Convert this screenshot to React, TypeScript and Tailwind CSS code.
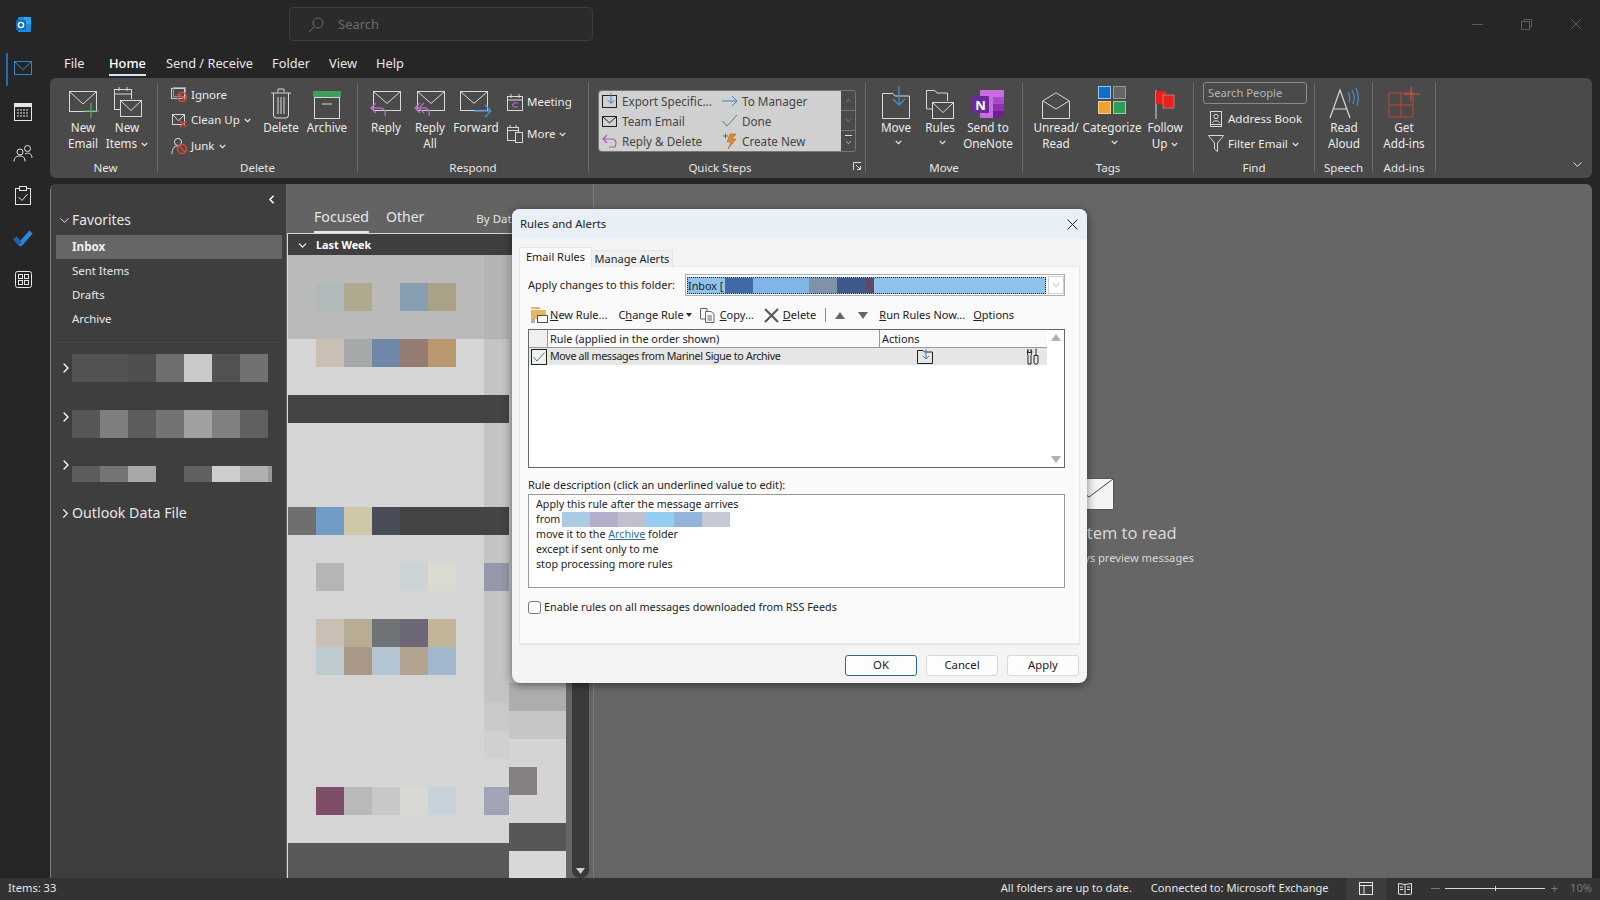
import type { ReactNode } from 'react';
import { ChevronDown, ChevronLeft, ChevronRight, ChevronUp } from 'lucide-react';

const Ico = ({ w, h, children, className }: { w: number; h: number; children: ReactNode; className?: string }) => (
  <svg width={w} height={h} viewBox={`0 0 ${w} ${h}`} className={`block shrink-0 ${className || ''}`}>
    {children}
  </svg>
);

const Envelope = ({ x = 0, y = 0, w = 28, h = 19, c = '#d9d9d9' }: { x?: number; y?: number; w?: number; h?: number; c?: string }) => (
  <g>
    <rect x={x + 0.5} y={y + 0.5} width={w - 1} height={h - 1} fill="none" stroke={c} />
    <path d={`M${x + 1} ${y + 1}L${x + w / 2} ${y + h * 0.62}L${x + w - 1} ${y + 1}`} fill="none" stroke={c} />
  </g>
);

const Caret = () => (
  <svg width="7" height="5" viewBox="0 0 7 5" className="inline-block ml-1 mb-[1px]">
    <path d="M0.8 1L3.5 3.6L6.2 1" fill="none" stroke="#e6e6e6" strokeWidth="1.2" />
  </svg>
);

function Big({ w, icon, lines, caret, caretOnly }: { w: string; icon: ReactNode; lines: string[]; caret?: boolean; caretOnly?: boolean }) {
  return (
    <div className={`flex flex-col items-center shrink-0 ${w}`}>
      <div className="h-[36px] flex items-end justify-center">{icon}</div>
      {lines.map((l, i) => (
        <div key={l} className="h-4 leading-4 text-[11.7px] whitespace-nowrap text-[#ececec]">
          {l}
          {caret && i === lines.length - 1 ? <Caret /> : null}
        </div>
      ))}
      {caretOnly ? <div className="h-4 leading-3"><Caret /></div> : null}
    </div>
  );
}

function Small({ icon, text, caret, h = 'h-[25px]' }: { icon: ReactNode; text: string; caret?: boolean; h?: string }) {
  return (
    <div className={`flex items-center gap-1 whitespace-nowrap text-[11.5px] text-[#ececec] ${h}`}>
      <span className="w-4 flex justify-center shrink-0">{icon}</span>
      <span>
        {text}
        {caret ? <Caret /> : null}
      </span>
    </div>
  );
}

function Group({ w, label, pl, last, children, extra, labelClass }: { w: string; label: string; pl: string; last?: boolean; children: ReactNode; extra?: ReactNode; labelClass?: string }) {
  return (
    <div className={`relative flex flex-col shrink-0 h-[89px] mt-[5px] ${w} ${last ? '' : 'border-r border-[#6b6b6b]'}`}>
      <div className={`flex h-[78px] ${pl}`}>{children}</div>
      <div className={`h-[11px] leading-[14px] text-center text-[11.5px] text-[#e6e6e6] ${labelClass || ''}`}>{label}</div>
      {extra}
    </div>
  );
}

const NoSign = ({ x, y }: { x: number; y: number }) => (
  <g>
    <circle cx={x} cy={y} r="4.5" fill="none" stroke="#d8473d" strokeWidth="1.6" />
    <path d={`M${x - 3} ${y - 3}L${x + 3} ${y + 3}`} stroke="#d8473d" strokeWidth="1.6" />
  </g>
);

const ReplyArrow = ({ double }: { double?: boolean }) => (
  <g fill="none" stroke="#b46bc0" strokeWidth="1.3">
    <path d="M6 13L1 18L6 23M1 18H10C14 18 16 21 15 26" />
    {double ? <path d="M10 13L5 18L10 23" /> : null}
  </g>
);

const QS = ({ icon, text }: { icon: ReactNode; text: string }) => (
  <div className="flex items-center gap-1 h-5 whitespace-nowrap">
    <span className="w-4 shrink-0 flex justify-center">{icon}</span>
    {text}
  </div>
);

function Ribbon() {
  return (
    <div className="flex h-[100px] rounded-md bg-[#4a4a4a] relative">
      <Group w="w-[108px]" label="New" pl="pl-[11px]" labelClass="pl-1">
        <Big w="w-11" lines={['New', 'Email']} icon={
          <Ico w={34} h={32}>
            <Envelope x={3} y={4} w={28} h={21} />
            <path d="M25 16V31M18 24H33" stroke="#4fae68" strokeWidth="1.2" />
          </Ico>
        } />
        <Big w="w-11" lines={['New', 'Items']} caret icon={
          <Ico w={30} h={33}>
            <rect x="2.5" y="3.5" width="17" height="20" fill="none" stroke="#d9d9d9" />
            <path d="M3 8H19M7 1V5M15 1V5" stroke="#d9d9d9" />
            <rect x="8" y="13" width="22" height="18" fill="#4a4a4a" />
            <Envelope x={8} y={14} w={22} h={17} />
          </Ico>
        } />
      </Group>

      <Group w="w-[200px]" label="Delete" pl="pl-[13px]">
        <div className="w-[88px] shrink-0 -mt-[1px]">
          <Small text="Ignore" icon={
            <Ico w={17} h={15}>
              <rect x="0.5" y="1.5" width="13" height="10" fill="none" stroke="#cfcfcf" />
              <rect x="2.5" y="0.5" width="12" height="9" fill="none" stroke="#9a9a9a" />
              <NoSign x={11} y={10} />
            </Ico>
          } />
          <Small h="h-[26px]" text="Clean Up" caret icon={
            <Ico w={17} h={15}>
              <Envelope x={1} y={1} w={13} h={11} />
              <path d="M9 8L15 14M15 8L9 14" stroke="#d8473d" strokeWidth="1.5" />
            </Ico>
          } />
          <Small text="Junk" caret icon={
            <Ico w={17} h={18}>
              <circle cx="7" cy="5" r="3.6" fill="none" stroke="#d9d9d9" />
              <path d="M1 17C1 12 3 9 6 9" fill="none" stroke="#d9d9d9" />
              <NoSign x={11} y={12} />
            </Ico>
          } />
        </div>
        <Big w="w-11" lines={['Delete']} icon={
          <Ico w={22} h={31}>
            <path d="M1 5H21M8 4V1H14V4" fill="none" stroke="#d9d9d9" />
            <path d="M3.5 5V27Q3.5 30 6 30H16Q18.5 30 18.5 27V5M8 9V26M11 9V26M14 9V26" fill="none" stroke="#d9d9d9" />
          </Ico>
        } />
        <div className="w-[2px] shrink-0" />
        <Big w="w-11" lines={['Archive']} icon={
          <Ico w={28} h={28}>
            <rect x="0" y="0" width="28" height="6" fill="#3f9e5a" />
            <rect x="1.5" y="6.5" width="25" height="21" fill="none" stroke="#d9d9d9" />
            <path d="M9 13H19" stroke="#d9d9d9" />
          </Ico>
        } />
      </Group>

      <Group w="w-[231px]" label="Respond" pl="pl-[6px]">
        <Big w="w-11" lines={['Reply']} icon={
          <Ico w={32} h={29}>
            <Envelope x={3} y={1} w={28} h={20} />
            <ReplyArrow />
          </Ico>
        } />
        <Big w="w-11" lines={['Reply', 'All']} icon={
          <Ico w={32} h={29}>
            <Envelope x={3} y={1} w={28} h={20} />
            <ReplyArrow double />
          </Ico>
        } />
        <Big w="w-12" lines={['Forward']} icon={
          <Ico w={32} h={29}>
            <Envelope x={0} y={1} w={28} h={20} />
            <path d="M14 21H30M25 15L31 21L25 27" fill="none" stroke="#4b8fd0" strokeWidth="1.3" />
          </Ico>
        } />
        <div className="ml-[7px] pt-[7px] flex flex-col gap-2">
          <Small h="h-6" text="Meeting" icon={
            <Ico w={16} h={17}>
              <rect x="0.5" y="2.5" width="15" height="14" fill="none" stroke="#d9d9d9" />
              <path d="M1 6H15M4 0V4M12 0V4" stroke="#d9d9d9" />
              <path d="M11 9H7L5.5 11L7 13H11" fill="none" stroke="#b46bc0" strokeWidth="1.2" />
            </Ico>
          } />
          <Small h="h-6" text="More" caret icon={
            <Ico w={16} h={18}>
              <rect x="0.5" y="2.5" width="11" height="13" fill="none" stroke="#d9d9d9" />
              <path d="M1 5.5H11M3 0V3M9 0V3" stroke="#d9d9d9" />
              <rect x="8.5" y="7.5" width="7" height="10" fill="#4a4a4a" stroke="#d9d9d9" />
            </Ico>
          } />
        </div>
      </Group>

      <Group w="w-[277px]" label="Quick Steps" pl="pl-[9px]" labelClass="pr-[14px]" extra={
        <svg width="9" height="9" viewBox="0 0 9 9" className="absolute right-[3px] bottom-[1px]">
          <path d="M0.5 8V0.5H8M3 3L7.5 7.5M7.5 4V7.5H4" fill="none" stroke="#dcdcdc" />
        </svg>
      }>
        <div className="flex h-[62px] w-[258px] mt-[7px] rounded-[3px] border border-[#777]">
          <div className="w-[243px] bg-[#d0d0d0] rounded-l-[3px] pl-[3px] grid grid-cols-[120px_1fr] content-start text-[11.7px] text-[#444] leading-5">
            <QS icon={<Ico w={16} h={16}><rect x="0.5" y="2.5" width="14" height="12" fill="none" stroke="#222" /><path d="M9 0V10M5.5 7L9 10.5L12.5 7" fill="none" stroke="#3d7fbf" /></Ico>} text="Export Specific..." />
            <QS icon={<Ico w={16} h={14}><path d="M0 7H15M10 2L15 7L10 12" fill="none" stroke="#3d7fbf" /></Ico>} text="To Manager" />
            <QS icon={<Ico w={16} h={13}><Envelope x={0} y={1} w={15} h={11} c="#222" /></Ico>} text="Team Email" />
            <QS icon={<Ico w={16} h={14}><path d="M0.5 7L5 12L15 1" fill="none" stroke="#4c8a5c" /></Ico>} text="Done" />
            <QS icon={<Ico w={16} h={14}><path d="M5 1L1 5L5 9M1 5H10C14 5 15 9 13 13H7" fill="none" stroke="#a45cb0" strokeWidth="1.1" /></Ico>} text="Reply & Delete" />
            <QS icon={<Ico w={16} h={17}><path d="M1 3H6M3.5 0.5V5.5" stroke="#1f8a4c" /><path d="M14 1H8L5 9H9L6 16L14 6H10Z" fill="#e28a2b" stroke="#a8561a" strokeWidth="0.5" /></Ico>} text="Create New" />
          </div>
          <div className="w-[14px] flex flex-col text-[#8c8c8c]">
            <div className="h-5 flex items-center justify-center border-b border-[#777]"><ChevronUp size={9} strokeWidth={2} /></div>
            <div className="h-5 flex items-center justify-center border-b border-[#777]"><ChevronDown size={9} strokeWidth={2} /></div>
            <div className="flex-1 flex flex-col items-center justify-center gap-[2px] text-[#e0e0e0]">
              <div className="w-[7px] border-t border-[#e0e0e0]" />
              <ChevronDown size={9} strokeWidth={2} />
            </div>
          </div>
        </div>
      </Group>

      <Group w="w-[157px]" label="Move" pl="pl-[8px]">
        <Big w="w-11" lines={['Move']} caretOnly icon={
          <Ico w={28} h={33}>
            <path d="M0.5 7.5H11L13 10H27.5V32.5H0.5Z" fill="none" stroke="#d9d9d9" />
            <path d="M17 0V19M11 13L17 19L23 13" fill="none" stroke="#4b8fd0" strokeWidth="1.2" />
          </Ico>
        } />
        <Big w="w-11" lines={['Rules']} caretOnly icon={
          <Ico w={28} h={30}>
            <path d="M0.5 1.5H9L11 4H21.5V20H0.5Z" fill="none" stroke="#d9d9d9" />
            <rect x="6" y="12" width="22" height="18" fill="#4a4a4a" />
            <Envelope x={6} y={13} w={22} h={17} />
          </Ico>
        } />
        <Big w="w-[52px]" lines={['Send to', 'OneNote']} icon={
          <Ico w={34} h={30}>
            <rect x="9" y="1" width="24" height="28" rx="1" fill="#c66de0" />
            <rect x="22" y="8" width="11" height="7" fill="#a94ac7" />
            <rect x="22" y="15" width="11" height="7" fill="#8d33ad" />
            <rect x="22" y="22" width="11" height="7" fill="#6d2290" />
            <rect x="1" y="7" width="17" height="17" rx="1" fill="#6a2a9c" />
            <text x="9.5" y="20.5" textAnchor="middle" fontSize="13" fontWeight="700" fill="#fff">N</text>
          </Ico>
        } />
      </Group>

      <Group w="w-[171px]" label="Tags" pl="pl-[5px]">
        <Big w="w-14" lines={['Unread/', 'Read']} icon={
          <Ico w={28} h={27}>
            <path d="M0.5 9L14 0.8L27.5 9V26.5H0.5Z" fill="none" stroke="#d9d9d9" />
            <path d="M1 9L14 17L27 9" fill="none" stroke="#d9d9d9" />
          </Ico>
        } />
        <Big w="w-14" lines={['Categorize']} caretOnly icon={
          <div className="grid grid-cols-[13px_13px] grid-rows-[13px_13px] gap-[2px] mb-[5px]">
            <div className="bg-[#0f6fc6] border border-[#9cc4e8]" />
            <div className="bg-[#666] border border-[#999]" />
            <div className="bg-[#f0a22e] border border-[#f4cf96]" />
            <div className="bg-[#2f9e55] border border-[#9ed0ae]" />
          </div>
        } />
        <Big w="w-[50px]" lines={['Follow', 'Up']} caret icon={
          <Ico w={20} h={29}>
            <path d="M1 0V29" stroke="#d9d9d9" />
            <rect x="1" y="1" width="10" height="13" fill="#e8201c" />
            <rect x="8" y="5" width="11" height="13" fill="#e8201c" stroke="#f29a96" strokeWidth="0.6" />
          </Ico>
        } />
      </Group>

      <Group w="w-[121px]" label="Find" pl="pl-[9px]">
        <div className="flex flex-col w-[104px]">
          <div className="h-[22px] -mt-[1px] rounded-[3px] border border-[#8a8a8a] px-1 text-[11.2px] leading-[19px] text-[#b5b5b5]">Search People</div>
          <div className="mt-[2px] pl-[5px]">
            <Small text="Address Book" icon={
              <Ico w={13} h={16}>
                <rect x="0.5" y="0.5" width="11" height="15" fill="none" stroke="#d9d9d9" />
                <circle cx="6" cy="5.5" r="2.2" fill="none" stroke="#d9d9d9" />
                <path d="M2.5 12C3 9 9 9 9.5 12M0 13.5H12" fill="none" stroke="#d9d9d9" />
              </Ico>
            } />
            <Small text="Filter Email" caret icon={
              <Ico w={16} h={17}>
                <path d="M0.5 0.5H15.5L9.5 8V16.5L6.5 14V8Z" fill="none" stroke="#d9d9d9" />
              </Ico>
            } />
          </div>
        </div>
      </Group>

      <Group w="w-[58px]" label="Speech" pl="pl-[1px]">
        <Big w="w-14" lines={['Read', 'Aloud']} icon={
          <Ico w={30} h={31}>
            <path d="M1 30L11 2L21 30M5 21H18" fill="none" stroke="#d9d9d9" strokeWidth="1.2" />
            <path d="M19 4Q22 9 20 14M23 2Q27 9 24 16M27 0Q31 9 28 18" fill="none" stroke="#4b8fd0" strokeWidth="1.2" />
          </Ico>
        } />
      </Group>

      <Group w="w-[63px]" label="Add-ins" pl="pl-[3px]">
        <Big w="w-14" lines={['Get', 'Add-ins']} icon={
          <Ico w={33} h={32}>
            <path d="M1 6H25V30H1ZM13 6V30M1 18H25" fill="none" stroke="#c8452e" />
            <path d="M23 0V14M16 7H32" stroke="#d8573f" />
          </Ico>
        } />
      </Group>

      <ChevronDown size={15} strokeWidth={1.5} className="absolute right-[7px] bottom-[6px] text-[#e6e6e6]" />
    </div>
  );
}

function Rail() {
  return (
    <div className="w-[50px] shrink-0 flex flex-col items-center pr-[4px] relative">
      <div className="h-[48px] flex items-center pt-[1px]">
        <Ico w={17} h={17}>
          <rect x="3" y="1" width="13" height="15" rx="1" fill="#1490df" />
          <rect x="9" y="1" width="7" height="7" fill="#28a8ea" />
          <rect x="1" y="4" width="10" height="10" rx="1" fill="#0f6cbd" />
          <circle cx="6" cy="9" r="2.6" fill="none" stroke="#fff" strokeWidth="1.4" />
        </Ico>
      </div>
      <div className="h-[40px] w-full flex items-center justify-center">
        <div className="absolute left-[6px] top-[53px] w-[2px] h-[33px] bg-[#1d6fb8] rounded-full" />
        <Ico w={18} h={14}><Envelope x={0} y={0} w={18} h={14} c="#2f86c9" /></Ico>
      </div>
      <div className="h-[46px] flex items-center justify-center">
        <Ico w={18} h={19}>
          <rect x="0.5" y="1.5" width="17" height="17" fill="none" stroke="#e6e6e6" />
          <rect x="1" y="1" width="16" height="4" fill="#e6e6e6" />
          <path d="M3 8H15M3 11H15M3 14H15" stroke="#e6e6e6" strokeDasharray="2 1" />
        </Ico>
      </div>
      <div className="h-[38px] flex items-center justify-center">
        <Ico w={20} h={18}>
          <circle cx="7" cy="8" r="3" fill="none" stroke="#e6e6e6" />
          <path d="M1 17.5C1 13 4 12 7 12C10 12 12 13.5 12 17.5" fill="none" stroke="#e6e6e6" />
          <circle cx="14.5" cy="4.5" r="3" fill="none" stroke="#e6e6e6" />
          <path d="M12 10C15 8 19 9.5 19 14" fill="none" stroke="#e6e6e6" />
        </Ico>
      </div>
      <div className="h-[46px] flex items-center justify-center">
        <Ico w={16} h={19}>
          <rect x="0.5" y="2.5" width="15" height="16" fill="none" stroke="#e6e6e6" />
          <rect x="4.5" y="0.5" width="7" height="4" fill="#262626" stroke="#e6e6e6" />
          <path d="M3.5 11L7 14.5L12.5 8" fill="none" stroke="#e6e6e6" />
        </Ico>
      </div>
      <div className="h-[38px] flex items-center justify-center">
        <Ico w={20} h={17}>
          <path d="M2 9L7.5 15L18 3" fill="none" stroke="#2f86e0" strokeWidth="4.5" />
          <path d="M2 9L7.5 15" fill="none" stroke="#1b5fa8" strokeWidth="4.5" />
        </Ico>
      </div>
      <div className="h-[46px] flex items-center justify-center">
        <Ico w={17} h={17}>
          <rect x="0.5" y="0.5" width="16" height="16" rx="2" fill="none" stroke="#e6e6e6" />
          <rect x="3.5" y="3.5" width="4" height="4" fill="none" stroke="#e6e6e6" />
          <rect x="9.5" y="3.5" width="4" height="4" fill="none" stroke="#e6e6e6" />
          <rect x="3.5" y="9.5" width="4" height="4" fill="none" stroke="#e6e6e6" />
          <rect x="9.5" y="9.5" width="4" height="4" fill="none" stroke="#e6e6e6" />
        </Ico>
      </div>
    </div>
  );
}

function Blocks({ cells, h = 'h-7' }: { cells: string[]; h?: string }) {
  return (
    <div className="flex">
      {cells.map((c, i) => (
        <div key={i} className={`${h} ${c === 'bg-[#999999]' ? 'w-1' : 'w-7'} ${c}`} />
      ))}
    </div>
  );
}

function FolderPane() {
  return (
    <div className="w-[236px] shrink-0 bg-[#3e3e3e] border-l border-[#7a7a7a] rounded-tl-md text-white relative">
      <ChevronLeft size={13} strokeWidth={3} className="absolute right-[8px] top-[9px]" />
      <div className="h-[26px] mt-[23px] pl-[6px] flex items-center text-[13.8px] text-[#e8e8e8]">
        <ChevronDown size={15} strokeWidth={1.5} />
        Favorites
      </div>
      <div className="ml-[5px] mr-[4px] mt-[2px] h-6 bg-[#666] pl-4 flex items-center font-bold text-[11.7px] text-[#f0f0f0]">Inbox</div>
      <div className="pl-[21px] text-[11.4px] text-[#eaeaea]">
        <div className="h-6 leading-6">Sent Items</div>
        <div className="h-6 leading-6">Drafts</div>
        <div className="h-6 leading-6">Archive</div>
      </div>
      <div className="ml-[5px] mr-[6px] mt-[11px] border-t border-[#484848]" />
      <div className="mt-[11px] pl-[21px] relative">
        <ChevronRight size={16} strokeWidth={2} className="absolute left-[7px] top-[6px]" />
        <Blocks cells={['bg-[#535353]', 'bg-[#535353]', 'bg-[#4e4e4e]', 'bg-[#6e6e6e]', 'bg-[#c9c9c9]', 'bg-[#525252]', 'bg-[#717171]']} />
      </div>
      <div className="mt-7 pl-[21px] relative">
        <ChevronRight size={16} strokeWidth={2} className="absolute left-[7px] top-[-1px]" />
        <Blocks cells={['bg-[#565656]', 'bg-[#7e7e7e]', 'bg-[#5c5c5c]', 'bg-[#737373]', 'bg-[#a0a0a0]', 'bg-[#808080]', 'bg-[#606060]']} />
      </div>
      <div className="mt-7 pl-[21px] relative">
        <ChevronRight size={16} strokeWidth={2} className="absolute left-[7px] top-[-9px]" />
        <Blocks h="h-4" cells={['bg-[#5d5d5d]', 'bg-[#747474]', 'bg-[#a8a8a8]', '', 'bg-[#616161]', 'bg-[#cdcdcd]', 'bg-[#b0b0b0]', 'bg-[#999999]']} />
      </div>
      <div className="mt-[19px] pl-[7px] h-6 flex items-center text-[14.2px] text-[#e8e8e8]">
        <ChevronRight size={15} strokeWidth={2} className="mr-[-1px]" />
        Outlook Data File
      </div>
    </div>
  );
}

const SEL = 'bg-[#bababa]';
const PLN = 'bg-[#d5d5d5]';
const DRK = 'bg-[#444444]';
const C7 = 'bg-[#c4c4c4]';

const listRows: [string, string[]][] = [
  [SEL, ['', '', '', '', '', '', '', 'bg-[#b4b4b4]']],
  [SEL, ['', 'bg-[#b2b9bb]', 'bg-[#aeaa8d]', '', 'bg-[#879db0]', 'bg-[#a9a286]', '', 'bg-[#b4b4b4]']],
  [SEL, ['', '', '', '', '', '', '', 'bg-[#b4b4b4]']],
  [PLN, ['', 'bg-[#c9bfb4]', 'bg-[#a5a9aa]', 'bg-[#6f88a8]', 'bg-[#947c72]', 'bg-[#b9976f]', '', C7]],
  [PLN, ['', '', '', '', '', '', '', C7]],
  [DRK, ['', '', '', '', '', '', '', '']],
  [PLN, ['', '', '', '', '', '', '', C7]],
  [PLN, ['', '', '', '', '', '', '', C7]],
  [PLN, ['', '', '', '', '', '', '', C7]],
  [DRK, ['bg-[#6f6f6f]', 'bg-[#6f9bc5]', 'bg-[#d0c7a8]', 'bg-[#484d58]', '', '', '', '']],
  [PLN, ['', '', '', '', '', '', '', C7]],
  [PLN, ['', 'bg-[#b5b5b5]', '', '', 'bg-[#ccd3d6]', 'bg-[#dbdad0]', '', 'bg-[#9498a8]']],
  [PLN, ['', '', '', '', '', '', '', C7]],
  [PLN, ['', 'bg-[#c9bfb4]', 'bg-[#b8ac94]', 'bg-[#6f7375]', 'bg-[#6c6878]', 'bg-[#c3b597]', '', C7]],
  [PLN, ['', 'bg-[#bfcccf]', 'bg-[#a99888]', 'bg-[#b3c4d2]', 'bg-[#b3a491]', 'bg-[#a0b7cc]', '', C7]],
  [PLN, ['', '', '', '', '', '', '', C7]],
  [PLN, ['', '', '', '', '', '', '', 'bg-[#c9c9c9]']],
  [PLN, ['', '', '', '', '', '', '', 'bg-[#d0d0d0]']],
  [PLN, ['', '', '', '', '', '', '', '']],
  [PLN, ['', 'bg-[#7e4d66]', 'bg-[#b9b9b7]', 'bg-[#c6c8ca]', 'bg-[#d8d8d4]', 'bg-[#c8d2da]', '', 'bg-[#a2a3b5]']],
  [PLN, ['', '', '', '', '', '', '', '']],
];

function MessageList() {
  return (
    <div className="w-[307px] shrink-0 bg-[#636363] flex flex-col">
      <div className="h-[49px] flex items-start pl-[28px] text-[#e6e6e6]">
        <div className="h-[49px] pt-[23px] w-[55px] border-b-2 border-[#e8e8e8] text-[14.2px] leading-5 whitespace-nowrap">Focused</div>
        <div className="pt-[23px] ml-[17px] text-[14px] leading-5">Other</div>
        <div className="pt-[25px] ml-[52px] text-[11.5px] leading-5 whitespace-nowrap">By Date</div>
      </div>
      <div className="flex-1 flex">
        <div className="w-[279px] ml-[1px] border-l border-t border-[#d8d8d8] flex flex-col bg-[#d5d5d5]">
          <div className="h-[21px] bg-[#3f3f3f] flex items-center pt-[2px] text-white text-[10.8px] font-bold">
            <ChevronDown size={13} strokeWidth={2} className="ml-[8px] mr-[7px]" />
            Last Week
          </div>
          <div className="flex flex-1">
            <div className="w-[221px] shrink-0 flex flex-col">
              {listRows.map(([bg, cells], i) => (
                <div key={i} className={`flex h-7 ${bg}`}>
                  {cells.map((c, j) => (
                    <div key={j} className={`h-7 shrink-0 ${j === 7 ? 'w-[25px]' : 'w-7'} ${c}`} />
                  ))}
                </div>
              ))}
              <div className="flex-1 bg-[#585858]" />
            </div>
            <div className="flex-1 flex flex-col">
              <div className="h-[428px] bg-[#c4c4c4]" />
              <div className="h-7 bg-[#aeaeae]" />
              <div className="h-7 bg-[#c6c6c6]" />
              <div className="h-7 bg-[#d4d4d4]" />
              <div className="h-7 flex bg-[#d4d4d4]"><div className="w-7 bg-[#857f80]" /></div>
              <div className="h-7 bg-[#d4d4d4]" />
              <div className="h-7 bg-[#575757]" />
              <div className="flex-1 bg-[#d8d8d8]" />
            </div>
          </div>
        </div>
        <div className="w-[6px] bg-[#666]" />
        <div className="w-[17px] bg-[#3a3a3a] rounded-b-lg flex flex-col justify-end items-center pb-[4px]">
          <svg width="9" height="6" viewBox="0 0 9 6"><path d="M0 0H9L4.5 6Z" fill="#d0d0d0" /></svg>
        </div>
      </div>
    </div>
  );
}

function ReadingPane() {
  return (
    <div className="flex-1 bg-[#666] border-l border-[#7a7a7a] flex flex-col items-center pt-[294px] text-[#d8d8d8]">
      <Ico w={50} h={32} className="-ml-[9px]">
        <rect x="0.5" y="0.5" width="49" height="31" fill="#f4f4f4" stroke="#555" />
        <path d="M1 1L25 19L49 1" fill="none" stroke="#444" />
      </Ico>
      <div className="mt-[11px] text-[16.4px] leading-6 whitespace-nowrap">Select an item to read</div>
      <div className="mt-[5px] text-[11.2px] leading-4 whitespace-nowrap">Click here to always preview messages</div>
    </div>
  );
}

function Btn({ children, primary }: { children: ReactNode; primary?: boolean }) {
  return (
    <div className={`w-[72px] h-[21px] bg-[#fdfdfd] rounded-[3px] border flex items-center justify-center text-[11.3px] text-[#222] ${primary ? 'border-[#2b6a8f]' : 'border-[#d8d8d8]'}`}>
      {children}
    </div>
  );
}

function RulesDialog() {
  return (
    <div className="absolute left-[512px] top-[209px] w-[575px] h-[474px] rounded-lg bg-[#f4f4f4] shadow-[0_2px_10px_rgba(0,0,0,0.5)] overflow-hidden text-[11px] text-[#222] flex flex-col">
      <div className="h-[30px] bg-[#e9eff6] flex items-center pl-[8px] pr-[9px] justify-between text-[11.4px]">
        <span>Rules and Alerts</span>
        <svg width="11" height="11" viewBox="0 0 11 11"><path d="M0.5 0.5L10.5 10.5M10.5 0.5L0.5 10.5" stroke="#222" strokeWidth="1" /></svg>
      </div>
      <div className="h-[406px] mx-[7px] flex flex-col border-b border-[#e2e2e2]">
        <div className="flex h-[19px] mt-[9px] items-end whitespace-nowrap">
          <div className="w-[73px] h-[20px] bg-[#fafafa] border border-b-0 border-[#e4e4e4] text-center leading-[17px] relative">Email Rules</div>
          <div className="w-[81px] h-[17px] bg-[#f0f0f0] border-t border-r border-[#e4e4e4] text-center leading-[15px]">Manage Alerts</div>
        </div>
        <div className="flex-1 bg-[#fafafa] border border-[#e8e8e8] -mt-px pl-[8px] pr-[14px]">
          <div className="flex items-center h-[24px] mt-[6px]">
            <span className="w-[157px] shrink-0 whitespace-nowrap">Apply changes to this folder:</span>
            <div className="flex-1 h-[22px] border border-[#adadad] bg-white flex items-center p-[1px] pr-0">
              <div className="flex-1 h-[17px] bg-[#90c3ec] border border-dotted border-[#222] flex leading-[15px] overflow-hidden text-[10.8px]">
                <span className="w-[37px] shrink-0 whitespace-nowrap text-[#222]">Inbox [</span>
                <div className="w-7 bg-[#3f6aa5]" />
                <div className="w-14 bg-[#80b5e5]" />
                <div className="w-7 bg-[#7f92a8]" />
                <div className="w-7 bg-[#3f5a8a]" />
                <div className="w-[9px] bg-[#5f4868]" />
              </div>
              <div className="w-[16px] ml-[2px] h-[18px] border border-[#d0d0d0] flex items-center justify-center text-[#555]"><ChevronDown size={12} strokeWidth={1} /></div>
            </div>
          </div>

          <div className="flex items-center h-[20px] mt-[8px] whitespace-nowrap">
            <Ico w={17} h={16} className="ml-[3px]">
              <rect x="0" y="3" width="15" height="9" fill="#e8b565" />
              <path d="M0 1H9" stroke="#e8b565" strokeWidth="2" />
              <rect x="6.5" y="8.5" width="10" height="7" fill="#fff" stroke="#555" />
              <path d="M0 13H4M0 15H4" stroke="#666" />
            </Ico>
            <span className="ml-[2px]"><u>N</u>ew Rule...</span>
            <span className="ml-[11px]">C<u>h</u>ange Rule</span>
            <svg width="6" height="4" viewBox="0 0 6 4" className="ml-[2px]"><path d="M0 0H6L3 4Z" fill="#333" /></svg>
            <Ico w={15} h={15} className="ml-[8px]">
              <path d="M0.5 0.5H7V11H0.5Z" fill="none" stroke="#666" />
              <path d="M5.5 3.5H11L14 6V14.5H5.5Z" fill="#fafafa" stroke="#666" />
              <path d="M7.5 8H12M7.5 10H12M7.5 12H12" stroke="#666" />
            </Ico>
            <span className="ml-[5px]"><u>C</u>opy...</span>
            <Ico w={15} h={15} className="ml-[10px]">
              <path d="M1 1L14 14M14 1L1 14" stroke="#555" strokeWidth="2" />
            </Ico>
            <span className="ml-[4px]"><u>D</u>elete</span>
            <div className="w-px h-[14px] bg-[#888] ml-[9px]" />
            <svg width="10" height="7" viewBox="0 0 10 7" className="ml-[9px]"><path d="M5 0L10 7H0Z" fill="#666" /></svg>
            <svg width="10" height="7" viewBox="0 0 10 7" className="ml-[13px]"><path d="M0 0H10L5 7Z" fill="#666" /></svg>
            <span className="ml-[11px]"><u>R</u>un Rules Now...</span>
            <span className="ml-[8px]"><u>O</u>ptions</span>
          </div>

          <div className="h-[139px] mt-[4px] border border-[#666] bg-white flex">
            <div className="w-[518px] shrink-0">
              <div className="h-[18px] flex border-b border-[#999] bg-[#fafafa] leading-[17px] text-[10.9px]">
                <div className="w-[19px] border-r border-[#999] bg-[#f0f0f0]" />
                <div className="w-[332px] border-r border-[#999] pl-[2px]">Rule (applied in the order shown)</div>
                <div className="pl-[2px]">Actions</div>
              </div>
              <div className="h-[17px] bg-[#e6e6e6] flex items-center">
                <div className="w-[16px] h-[16px] ml-[2px] border border-[#222] bg-[#f0f0f0] flex items-center justify-center">
                  <svg width="12" height="10" viewBox="0 0 12 10"><path d="M0.5 5L4 9L11.5 0.5" fill="none" stroke="#3f8a5c" /></svg>
                </div>
                <span className="ml-[3px] w-[368px] whitespace-nowrap text-[10.7px] tracking-[-0.33px]">Move all messages from Marinel Sigue to Archive</span>
                <Ico w={17} h={15} className="-ml-[1px]">
                  <path d="M0.5 1.5H6L7.5 3H15.5V14.5H0.5Z" fill="none" stroke="#222" />
                  <path d="M9 0V10M6 7L9 10L12 7" fill="none" stroke="#3d7fbf" />
                </Ico>
                <Ico w={14} h={17} className="ml-[92px]">
                  <path d="M3.5 7V15.5H0.5V7C-0.5 5 0 2 0.5 1V4H3.5V1C4.5 2 4.5 5 3.5 7Z" transform="translate(1.5 0.5)" fill="none" stroke="#222" />
                  <path d="M10 0.5V7M8 7.5H12V15C12 16.5 8 16.5 8 15Z" fill="none" stroke="#222" />
                </Ico>
              </div>
            </div>
            <div className="flex-1 flex flex-col items-center justify-between py-[4px]">
              <svg width="10" height="7" viewBox="0 0 10 7"><path d="M5 0L10 7H0Z" fill="#b0b0b0" /></svg>
              <svg width="10" height="7" viewBox="0 0 10 7"><path d="M0 0H10L5 7Z" fill="#b0b0b0" /></svg>
            </div>
          </div>

          <div className="mt-[9px] h-[17px] leading-4 text-[10.9px]">Rule description (click an underlined value to edit):</div>
          <div className="h-[94px] border border-[#9a9a9a] bg-white pl-[7px] pt-[2px] leading-[15px] text-[10.7px]">
            <div>Apply this rule after the message arrives</div>
            <div className="flex">
              <span className="w-[26px]">from</span>
              <div className="w-7 bg-[#a9cbe3]" />
              <div className="w-7 bg-[#b5aecb]" />
              <div className="w-7 bg-[#c0bfcb]" />
              <div className="w-7 bg-[#94cdf0]" />
              <div className="w-7 bg-[#93b5db]" />
              <div className="w-7 bg-[#c6c8d3]" />
            </div>
            <div>move it to the <u className="text-[#2f6f96]">Archive</u> folder</div>
            <div>except if sent only to me</div>
            <div>stop processing more rules</div>
          </div>

          <div className="flex items-center h-[14px] mt-[12px] text-[10.8px]">
            <div className="w-[13px] h-[13px] rounded-[3px] border border-[#777] bg-white" />
            <span className="ml-[3px]">Enable rules on all messages downloaded from RSS Feeds</span>
          </div>
        </div>
      </div>
      <div className="flex justify-end gap-[9px] pr-[8px] pt-[10px]">
        <Btn primary>OK</Btn>
        <Btn>Cancel</Btn>
        <Btn>Apply</Btn>
      </div>
    </div>
  );
}

function StatusBar() {
  return (
    <div className="h-[22px] bg-[#333] flex items-center pb-[1px] text-[11.1px] text-[#e6e6e6] whitespace-nowrap">
      <span className="ml-2">Items: 33</span>
      <span className="ml-auto">All folders are up to date.</span>
      <span className="ml-[19px]">Connected to: Microsoft Exchange</span>
      <div className="w-[40px] h-[22px] ml-[17px] bg-[#3d3d3d] flex items-center justify-center">
        <Ico w={14} h={13}>
          <rect x="0.5" y="0.5" width="13" height="12" fill="none" stroke="#e6e6e6" />
          <path d="M0 3.5H14M5 3V13" stroke="#e6e6e6" />
        </Ico>
      </div>
      <Ico w={14} h={13} className="ml-[12px]">
        <path d="M0.5 1.5L7 2.5L13.5 1.5V12L7 13L0.5 12ZM7 2.5V13M2 5H5M2 7.5H5M9 5H12M9 7.5H12" fill="none" stroke="#e6e6e6" />
      </Ico>
      <div className="w-[9px] border-t border-[#777] ml-[19px]" />
      <div className="w-[100px] ml-[5px] border-t border-[#d8d8d8] relative">
        <div className="absolute left-1/2 -top-[3px] h-[5px] border-l border-[#d8d8d8]" />
      </div>
      <span className="ml-[6px] text-[13px] text-[#777]">+</span>
      <span className="ml-[12px] mr-[8px] text-[#777]">10%</span>
    </div>
  );
}

export default function App() {
  return (
    <div className="relative w-[1600px] h-[900px] overflow-hidden bg-[#262626] flex flex-col" style={{ fontFamily: '"Noto Sans", "Open Sans", sans-serif' }}>
      <div className="flex h-[878px]">
        <Rail />
        <div className="flex-1 flex flex-col pr-[8px]">
          <div className="h-[48px] flex items-start relative">
            <div className="ml-[239px] mt-[7px] w-[304px] h-[34px] rounded bg-[#2b2b2b] border border-[#3d3d3d] flex items-center pt-[1px] pl-[18px] text-[13px] text-[#6c6c6c]">
              <Ico w={16} h={16}>
                <circle cx="10" cy="6" r="5" fill="none" stroke="#6c6c6c" />
                <path d="M6.5 9.5L1 15" stroke="#6c6c6c" />
              </Ico>
              <span className="ml-[14px]">Search</span>
            </div>
            <div className="ml-auto flex items-center gap-[38px] h-[48px] pr-[10px]">
              <div className="w-[11px] border-t border-[#5a5a5a]" />
              <Ico w={11} h={11}>
                <rect x="0.5" y="2.5" width="8" height="8" fill="none" stroke="#5a5a5a" />
                <path d="M3 2.5V0.5H10.5V8H8.5" fill="none" stroke="#5a5a5a" />
              </Ico>
              <svg width="12" height="12" viewBox="0 0 12 12"><path d="M0.5 0.5L11.5 11.5M11.5 0.5L0.5 11.5" stroke="#5a5a5a" /></svg>
            </div>
          </div>
          <div className="h-[30px] flex items-center pl-[14px] pt-[1px] text-[12.8px] text-[#e8e8e8]">
            <span className="w-[45px]">File</span>
            <span className="w-[57px]">
              <span className="relative inline-block font-medium text-white">
                Home
                <span className="absolute left-0 right-0 -bottom-[3px] h-[2px] bg-[#cfe4f5]" />
              </span>
            </span>
            <span className="w-[106px]">Send / Receive</span>
            <span className="w-[57px]">Folder</span>
            <span className="w-[47px]">View</span>
            <span>Help</span>
          </div>
          <Ribbon />
          <div className="flex-1 mt-[6px] flex overflow-hidden rounded-t-md">
            <FolderPane />
            <MessageList />
            <ReadingPane />
          </div>
        </div>
      </div>
      <StatusBar />
      <RulesDialog />
    </div>
  );
}
